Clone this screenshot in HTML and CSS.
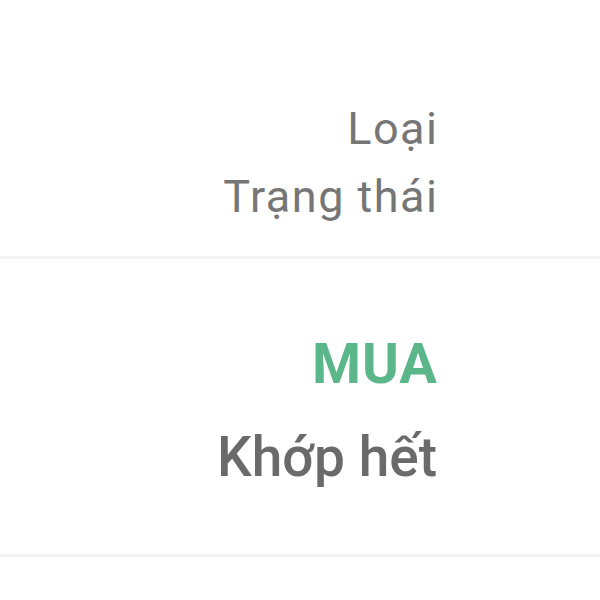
FILE: index.html
```html
<!DOCTYPE html>
<html lang="vi">
<head>
	<meta charset="UTF-8">
	<meta name="viewport" content="width=device-width, initial-scale=1.0">
	<link rel="stylesheet" href="styles.css">
	<title>Chi tiết lệnh</title>
</head>
<body>
	<section class="block block-labels">
		<div class="label">Loại</div>
		<div class="label">Trạng thái</div>
	</section>
	<section class="block block-values">
		<div class="value value-buy">MUA</div>
		<div class="value">Khớp hết</div>
	</section>
</body>
</html>
```

FILE: styles.css
```css
* {
  margin: 0;
  padding: 0;
  box-sizing: border-box;
}
html, body {
  background: #fff;
}
body {
  font-family: Roboto, "Noto Sans", sans-serif;
  width: 600px;
  height: 600px;
  overflow: hidden;
}
.block {
  display: flex;
  flex-direction: column;
  align-items: flex-end;
  padding-right: 163px;
  border-bottom: 3px solid #f3f3f3;
}
.block-labels {
  padding-top: 95px;
  padding-bottom: 25px;
}
.block-values {
  padding-top: 59px;
  padding-bottom: 50px;
}
.label {
  margin-right: -1.5px;
  font-size: 45px;
  line-height: 68px;
  letter-spacing: 1.5px;
  color: #767676;
}
.value {
  font-size: 55px;
  font-weight: 500;
  line-height: 93px;
  color: #6a6a6a;
}
.value-buy {
  margin-right: -1px;
  font-size: 56px;
  font-weight: 700;
  letter-spacing: 1px;
  color: #5bb68a;
}
```
